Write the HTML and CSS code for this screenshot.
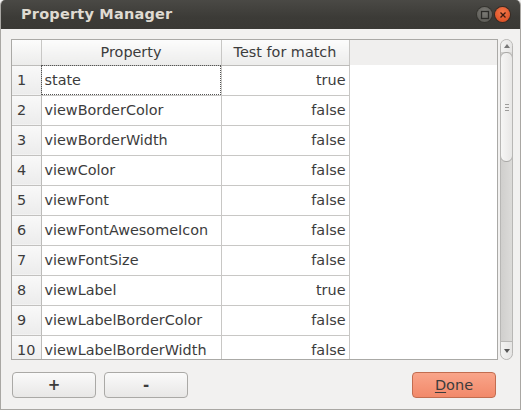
FILE: index.html
```html
<!DOCTYPE html>
<html>
<head>
<meta charset="utf-8">
<link rel="stylesheet" href="styles.css">
</head>
<body>
<div class="window">
  <div class="titlebar">
    <span class="title">Property Manager</span>
    <div class="controls">
      <span class="ctl max"><svg width="10" height="10" viewBox="0 0 10 10"><rect x="1.5" y="1.5" width="7" height="7" fill="none" stroke="#2c2b28" stroke-width="1.3"/></svg></span>
      <span class="ctl close"><svg width="10" height="10" viewBox="0 0 10 10"><path d="M2.5 2.5L7.5 7.5M7.5 2.5L2.5 7.5" stroke="#3a1a10" stroke-width="1.3"/></svg></span>
    </div>
  </div>
  <div class="body">
    <div class="tablearea">
      <div class="frame">
        <table class="grid">
          <thead>
            <tr><th class="num"></th><th class="prop">Property</th><th class="val">Test for match</th><th class="rest"></th></tr>
          </thead>
          <tbody>
            <tr><td class="num">1</td><td class="prop focus">state</td><td class="val">true</td><td class="rest"></td></tr>
            <tr><td class="num">2</td><td class="prop">viewBorderColor</td><td class="val">false</td><td class="rest"></td></tr>
            <tr><td class="num">3</td><td class="prop">viewBorderWidth</td><td class="val">false</td><td class="rest"></td></tr>
            <tr><td class="num">4</td><td class="prop">viewColor</td><td class="val">false</td><td class="rest"></td></tr>
            <tr><td class="num">5</td><td class="prop">viewFont</td><td class="val">false</td><td class="rest"></td></tr>
            <tr><td class="num">6</td><td class="prop">viewFontAwesomeIcon</td><td class="val">false</td><td class="rest"></td></tr>
            <tr><td class="num">7</td><td class="prop">viewFontSize</td><td class="val">false</td><td class="rest"></td></tr>
            <tr><td class="num">8</td><td class="prop">viewLabel</td><td class="val">true</td><td class="rest"></td></tr>
            <tr><td class="num">9</td><td class="prop">viewLabelBorderColor</td><td class="val">false</td><td class="rest"></td></tr>
            <tr><td class="num">10</td><td class="prop">viewLabelBorderWidth</td><td class="val">false</td><td class="rest"></td></tr>
          </tbody>
        </table>
      </div>
      <div class="scrollbar">
        <div class="arrow up"><svg width="6" height="4" viewBox="0 0 6 4"><path d="M0 4L3 0L6 4Z" fill="#777"/></svg></div>
        <div class="track">
          <div class="thumb"><span class="grip"></span></div>
        </div>
        <div class="arrow down"><svg width="6" height="4" viewBox="0 0 6 4"><path d="M0 0L3 4L6 0Z" fill="#555"/></svg></div>
      </div>
    </div>
    <div class="buttons">
      <button class="btn">+</button>
      <button class="btn">-</button>
      <span class="spacer"></span>
      <button class="btn done"><u>D</u>one</button>
    </div>
  </div>
</div>
</body>
</html>
```
FILE: styles.css
```css
* { box-sizing: border-box; }
html, body { margin: 0; padding: 0; background: #f2f1f0; }
body { width: 521px; height: 410px; overflow: hidden; font-family: "DejaVu Sans", sans-serif; }
.window {
  width: 521px; height: 410px;
  display: flex; flex-direction: column;
  background: #f2f1f0;
  border-left: 1px solid #a9a7a3;
  border-right: 1px solid #a9a7a3;
  border-bottom: 1px solid #a9a7a3;
  border-radius: 5px 5px 0 0;
  overflow: hidden;
}
.titlebar {
  height: 29px; flex: none;
  background: linear-gradient(#4a4945, #3c3b37 60%, #3a3935);
  display: flex; align-items: center;
  padding-left: 21px; padding-right: 11px;
  margin: 0 -1px;
}
.title {
  color: #dfdbd2; font-weight: bold; font-size: 14.5px; letter-spacing: 0.2px;
  margin-top: -1px; flex: 1;
}
.controls { display: flex; gap: 3px; align-items: center; }
.ctl {
  width: 15px; height: 15px; border-radius: 50%;
  display: flex; align-items: center; justify-content: center;
}
.ctl svg { display: block; }
.max { background: radial-gradient(circle at 50% 35%, #7c7b76, #55544f); box-shadow: 0 0 0 1px #35342f; }
.close { background: radial-gradient(circle at 50% 35%, #f4784a, #d6461c); box-shadow: 0 0 0 1px #3a2a22; }
.body {
  flex: 1;
  padding: 10px 7px 0 10px;
  display: flex; flex-direction: column;
}
.tablearea { display: flex; height: 321px; }
.frame {
  width: 487px; height: 321px;
  border: 1px solid #aaa9a6;
  background: #ffffff;
  overflow: hidden;
  position: relative;
}
.frame::before {
  content: ""; position: absolute; left: 0; right: 0; top: 0; height: 25px;
  background: #f0efee; z-index: 0;
}
.grid {
  border-collapse: collapse; table-layout: fixed;
  font-size: 14.4px; color: #3c3c3c;
  position: relative; z-index: 1;
}
.grid th {
  height: 25px; padding: 0;
  font-weight: normal; color: #3c3c3c;
  background: linear-gradient(#fcfcfc, #ececeb);
  border-right: 1px solid #c8c7c5;
  border-bottom: 1px solid #bdbcba;
  text-align: center; vertical-align: middle;
  line-height: 23px;
}
.grid th.rest { background: #f0efee; border: none; }
.grid td {
  height: 30px; padding: 0;
  border-right: 1px solid #c8c7c5;
  border-bottom: 1px solid #c8c7c5;
  vertical-align: middle;
  white-space: nowrap; overflow: hidden;
}
.grid td.rest { border: none; }
.num { width: 29px; }
.prop { width: 180px; }
.val { width: 128px; }
.rest { width: 148px; }
.grid td.num {
  background: linear-gradient(#f9f9f9, #ebebeb);
  padding-left: 5px;
  border-right-color: #bdbcba;
  border-bottom-color: #c2c1bf;
}
.grid td.prop { padding-left: 3px; }
.grid td.val { text-align: right; padding-right: 3px; }
.grid td.focus { outline: 1px dotted #555; outline-offset: -1px; }
.scrollbar {
  width: 13px; margin-left: 2px; height: 321px;
  display: flex; flex-direction: column;
  border: 1px solid #b8b7b5; border-radius: 7px;
  background: #d6d5d3;
  overflow: hidden;
}
.arrow {
  height: 12px; flex: none;
  background: linear-gradient(90deg, #f3f3f2, #e6e5e4);
  display: flex; align-items: center; justify-content: center;
}
.arrow.down { height: 18px; border-top: 1px solid #b8b7b5; border-radius: 0 0 6px 6px; }
.track { flex: 1; background: linear-gradient(90deg, #d0cfcd, #dcdbd9); }
.thumb {
  height: 110px;
  border: 1px solid #a9a8a6; border-radius: 6px;
  background: linear-gradient(90deg, #f6f6f5, #e8e7e6);
  display: flex; align-items: center; justify-content: center;
  margin: 0 -1px;
}
.grip {
  width: 4px; height: 7px;
  background: repeating-linear-gradient(#9d9c9a 0 1px, transparent 1px 3px);
}
.buttons {
  display: flex; align-items: center; gap: 8px;
  margin-top: 12px;
  padding-left: 1px;
}
.spacer { flex: 1; }
.btn {
  width: 84px; height: 26px;
  border: 1px solid #aaa9a6; border-radius: 4px;
  background: linear-gradient(#fafafa, #e8e7e6);
  font-family: "DejaVu Sans", sans-serif; font-size: 15px; font-weight: bold;
  color: #3c3c3c;
  padding: 0;
}
.btn.done {
  font-weight: normal; font-size: 14.5px;
  background: linear-gradient(#f9a58a, #f2896a);
  border-color: #c26d50;
  margin-right: 17px;
}
.btn.done u { text-decoration-thickness: 1px; text-underline-offset: 2px; }
```
